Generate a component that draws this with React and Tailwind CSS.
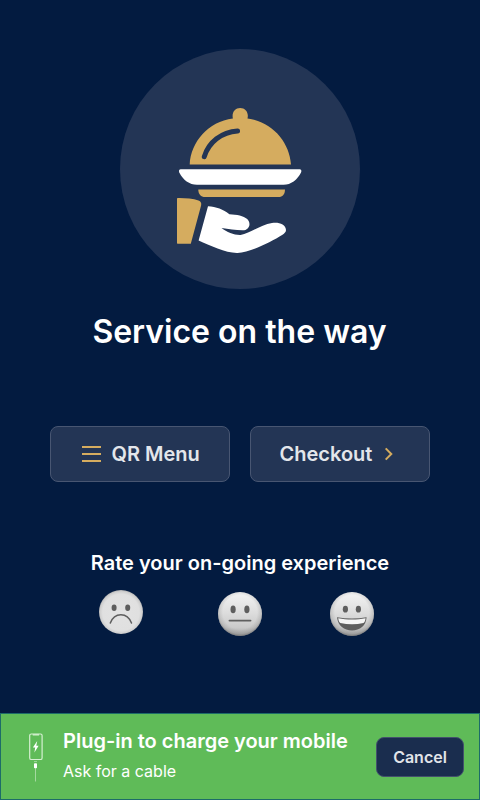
function ServiceIcon() {
  return (
    <svg viewBox="120 49 240 240" className="size-60" aria-hidden="true">
      <g fill="#d5ac5f">
        <path d="M189.7 164.4C191 142 208 121.5 232.9 118.5C231.5 112.5 235 108 240.2 108S249 112.5 247.5 118.5C272 121.5 289.5 142 291 164.4Z" />
        <path d="M198.3 189.4H285C285 194 282.5 197 278.5 197H205C201 197 198.3 194 198.3 189.4Z" />
        <path d="M177 199C177 198.4 177.5 198 178 198C185 197.9 193 198.7 198.5 200.4C200.8 201.2 201.7 203 201.1 205.4L190.8 243.7H177.6Q177 243.7 177 243Z" />
      </g>
      <path d="M237.6 130.9C221.5 131.8 208.6 142.3 204.3 156.6" fill="none" stroke="#233555" strokeWidth="5" strokeLinecap="round" />
      <g fill="#fff">
        <path d="M180.6 169.2H299.8C301.2 169.2 301.8 170.7 301 172.4C297.2 179.8 291 184.7 283.5 184.7H197C189.3 184.7 183 179.8 179.3 172.4C178.6 170.7 179.2 169.2 180.6 169.2Z" />
        <path d="M208 206.3C216 206.6 223.5 209.6 229.4 214.2C237 214.6 243.5 215.6 247.2 219C251.6 223.4 249.4 230.3 242.5 230.3C235.5 230.3 228.5 228.8 221.5 228C227 232.2 234 235.2 240.5 235C250 233.5 260.5 224.8 272 223C278.5 221.8 285.7 224.2 286 230C286 232 284.5 233.3 282.5 234.7C270.5 242.2 250 252.5 237.5 253C226 253.3 210 245.5 198.6 240.6Z" />
      </g>
    </svg>
  );
}

function Face({ id, children }) {
  return (
    <svg viewBox="0 0 44 44" className="size-11" aria-hidden="true">
      <defs>
        <linearGradient id={id} x1="0" y1="0" x2="0" y2="1">
          <stop offset="0" stopColor="#f4f4f4" />
          <stop offset="0.45" stopColor="#dedede" />
          <stop offset="0.8" stopColor="#cacaca" />
          <stop offset="1" stopColor="#a4a4a4" />
        </linearGradient>
        <radialGradient id={`${id}-rim`} cx="50%" cy="46%" r="54%">
          <stop offset="0.72" stopColor="#777" stopOpacity="0" />
          <stop offset="0.9" stopColor="#777" stopOpacity="0.25" />
          <stop offset="1" stopColor="#666" stopOpacity="0.7" />
        </radialGradient>
      </defs>
      <circle cx="22" cy="22" r="22" fill={`url(#${id})`} />
      <circle cx="22" cy="22" r="22" fill={`url(#${id}-rim)`} />
      {children}
    </svg>
  );
}

function SadFace() {
  return (
    <svg viewBox="0 0 44 44" className="size-11" aria-hidden="true">
      <defs>
        <radialGradient id="sad" cx="50%" cy="51%" r="52%">
          <stop offset="0" stopColor="#e2e2e2" />
          <stop offset="0.8" stopColor="#e0e0e0" />
          <stop offset="0.91" stopColor="#d0d0d0" />
          <stop offset="1" stopColor="#aaaaaa" />
        </radialGradient>
      </defs>
      <circle cx="22" cy="22" r="22" fill="url(#sad)" />
      <g fill="#5e5e5e">
        <ellipse cx="15.1" cy="17.8" rx="2.5" ry="3.2" />
        <ellipse cx="28.7" cy="17.8" rx="2.5" ry="3.2" />
      </g>
      <path d="M11.3 33C15.5 21.9 28.3 21.9 32.5 33" fill="none" stroke="#5e5e5e" strokeWidth="1.5" strokeLinecap="round" />
    </svg>
  );
}

function ChargeIcon() {
  return (
    <svg viewBox="0 0 16 50" className="h-[50px] w-4" fill="none" stroke="#d5efd1" aria-hidden="true">
      <rect x="1.7" y="2" width="12.4" height="25.5" rx="1.6" strokeWidth="1.2" />
      <path d="M4.7 2.8H11.1" strokeWidth="1.4" />
      <path d="M9.2 9.1L4.9 15.5H7.2L6.4 20.5L10.6 13.8H8.3Z" fill="#fff" stroke="none" />
      <path d="M6 29.6H9" strokeWidth="0.8" opacity="0.7" />
      <rect x="6" y="31.3" width="3" height="5" rx="0.8" fill="#fff" stroke="none" />
      <path d="M7.5 36V49.5" strokeWidth="0.8" opacity="0.75" />
    </svg>
  );
}

const actionClass =
  "flex h-14 w-[180px] items-center rounded-lg border border-[#485672] bg-[#233555] text-xl font-semibold text-[#e3e6eb]";

export default function App() {
  return (
    <main className="flex h-[800px] w-[480px] flex-col items-center overflow-hidden bg-[#031b40] pt-[49px] font-['Inter',sans-serif] text-white">
      <div className="size-60 shrink-0 rounded-full bg-[#233555]">
        <ServiceIcon />
      </div>
      <h1 className="mt-[23px] pr-px text-[32px] leading-10 font-semibold whitespace-nowrap">Service on the way</h1>

      <div className="mt-[74px] flex gap-5">
        <button className={`${actionClass} pl-[31px]`}>
          <svg viewBox="0 0 19 16" className="mr-[10.5px] h-4 w-[19px]" stroke="#d5ac5f" strokeWidth="2" aria-hidden="true">
            <path d="M0 1H19M0 8H19M0 15H19" />
          </svg>
          QR Menu
        </button>
        <button className={`${actionClass} pl-[28.5px]`}>
          Checkout
          <svg viewBox="0 0 10 14" className="ml-3 h-3.5 w-2.5" fill="none" stroke="#d5ac5f" strokeWidth="2" aria-hidden="true">
            <path d="M1.7 1.4L7.3 7L1.7 12.6" />
          </svg>
        </button>
      </div>

      <h2 className="mt-[67px] text-xl leading-7 font-semibold whitespace-nowrap">Rate your on-going experience</h2>
      <div className="mt-[13px] flex w-full items-end pl-[99px]">
        <div className="pb-0.5">
          <SadFace />
        </div>
        <div className="ml-[75px]">
          <Face id="neutral">
            <g fill="#5e5e5e">
              <ellipse cx="15.1" cy="17.4" rx="2.6" ry="3.8" />
              <ellipse cx="28.9" cy="17.4" rx="2.6" ry="3.8" />
            </g>
            <path d="M11.5 28.6H32.5" stroke="#5e5e5e" strokeWidth="1.9" strokeLinecap="round" />
          </Face>
        </div>
        <div className="ml-[68px]">
          <Face id="happy">
            <g fill="#5e5e5e">
              <ellipse cx="15.4" cy="17.2" rx="2.6" ry="3.4" />
              <ellipse cx="28.4" cy="17.2" rx="2.6" ry="3.4" />
            </g>
            <path d="M7 25.2C17 27 27 27 36.6 25.2C36 33.8 30 38.4 22 38.4S8 33.8 7 25.2Z" fill="#5e5e5e" />
            <path d="M8.2 26.2C17 27.9 27 27.9 35.6 26.2C35.3 28.6 34.7 30 33.5 31C26 32.6 18 32.6 10.3 31C9.1 30 8.5 28.6 8.2 26.2Z" fill="#f5f5f5" />
          </Face>
        </div>
      </div>

      <footer className="mt-auto flex h-[87px] w-full shrink-0 items-center border border-[#1d6c68] bg-[#5fbb58] pr-[15px] pl-[27px]">
        <ChargeIcon />
        <div className="ml-[19px] whitespace-nowrap">
          <p className="text-xl leading-7 font-semibold">Plug-in to charge your mobile</p>
          <p className="mt-[3px] pb-[3px] text-base leading-[26px]">Ask for a cable</p>
        </div>
        <button className="ml-auto h-10 w-[88px] rounded-lg border border-[#43506c] bg-[#1a2d4e] text-base font-semibold text-[#e1e4e9]">
          Cancel
        </button>
      </footer>
    </main>
  );
}
